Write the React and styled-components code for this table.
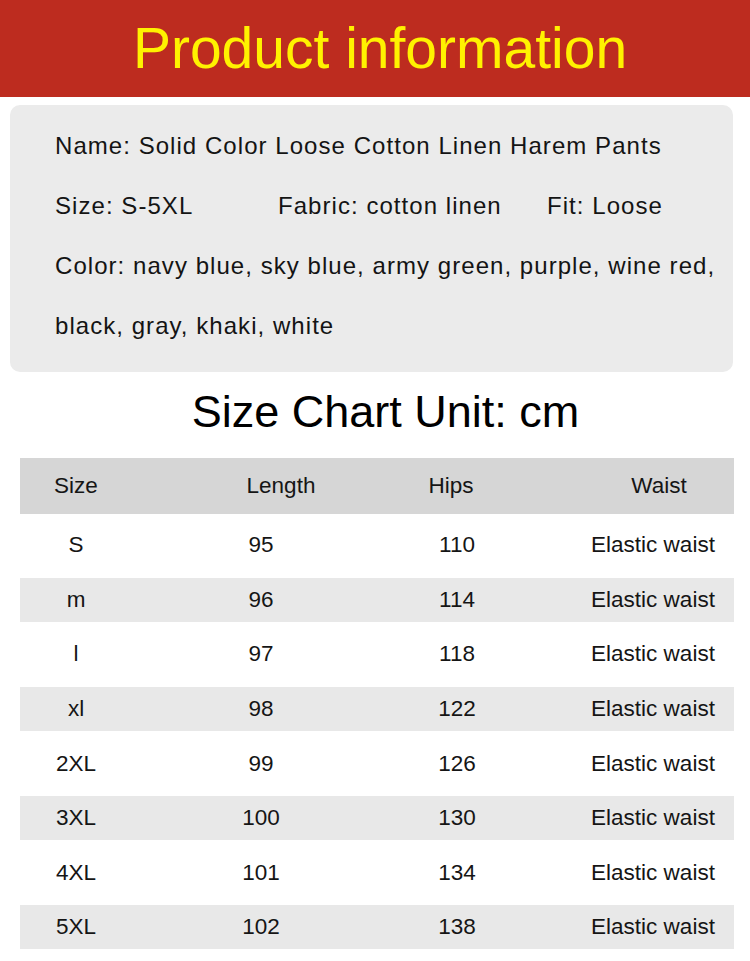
import React from 'react';
import styled, { createGlobalStyle } from 'styled-components';

const GlobalStyle = createGlobalStyle`
  body {
    margin: 0;
    background: #ffffff;
    font-family: "Liberation Sans", Arial, sans-serif;
    color: #111111;
  }
`

const Page = styled.div`
  width: 750px;
  display: flex;
  flex-direction: column;
`

const Banner = styled.header`
  height: 97px;
  background: #bd2c1f;
  display: flex;
  align-items: center;
  justify-content: center;
`

const BannerTitle = styled.h1`
  margin: 0 0 0 10px;
  font-size: 57px;
  font-weight: 400;
  line-height: 1;
  color: #fff200;
`

const InfoCard = styled.section`
  margin: 8px 17px 0 10px;
  height: 267px;
  box-sizing: border-box;
  padding: 11px 0 0 45px;
  background: #ebebeb;
  border-radius: 10px;
`

const InfoLine = styled.div`
  display: flex;
  font-size: 24px;
  letter-spacing: 1.05px;
  line-height: 60px;
  color: #141414;
  white-space: nowrap;
`

const Field = styled.span`
  width: ${props => props.$w ? props.$w + 'px' : 'auto'};
`

const ChartTitle = styled.h2`
  margin: 14px 0 0;
  padding-left: 21px;
  text-align: center;
  font-size: 45px;
  font-weight: 400;
  line-height: 52px;
  color: #000;
`

const Table = styled.div`
  margin: 20px 16px 0 20px;
  display: flex;
  flex-direction: column;
`

const HeadRow = styled.div`
  display: grid;
  grid-template-columns: 224px 74px 266px 150px;
  height: 56px;
  align-items: center;
  background: #d6d6d6;
  margin-bottom: 4px;
`

const BodyRow = styled.div`
  display: grid;
  grid-template-columns: 160px 162px 230px 162px;
  height: 54.6px;
  box-sizing: border-box;
  padding: 5.3px 0;
  align-items: center;
  background: ${props => props.$shaded ? '#e8e8e8' : 'transparent'};
  background-clip: content-box;
`

const Cell = styled.div`
  text-align: center;
  font-size: 22.5px;
  color: #151515;
  white-space: nowrap;
  padding-right: ${props => props.$pr || 0}px;
`

const rows = [
  ['S', '95', '110'],
  ['m', '96', '114'],
  ['l', '97', '118'],
  ['xl', '98', '122'],
  ['2XL', '99', '126'],
  ['3XL', '100', '130'],
  ['4XL', '101', '134'],
  ['5XL', '102', '138'],
];

const App = () => {
  return (
    <Page>
      <GlobalStyle />
      <Banner>
        <BannerTitle>Product information</BannerTitle>
      </Banner>
      <InfoCard>
        <InfoLine>Name: Solid Color Loose Cotton Linen Harem Pants</InfoLine>
        <InfoLine>
          <Field $w={223}>Size: S-5XL</Field>
          <Field $w={269}>Fabric: cotton linen</Field>
          <Field>Fit: Loose</Field>
        </InfoLine>
        <InfoLine>Color: navy blue, sky blue, army green, purple, wine red,</InfoLine>
        <InfoLine>black, gray, khaki, white</InfoLine>
      </InfoCard>
      <ChartTitle>Size Chart Unit: cm</ChartTitle>
      <Table>
        <HeadRow>
          <Cell $pr={112}>Size</Cell>
          <Cell>Length</Cell>
          <Cell>Hips</Cell>
          <Cell>Waist</Cell>
        </HeadRow>
        {rows.map((row, i) => (
          <BodyRow key={row[0]} $shaded={i % 2 === 1}>
            <Cell $pr={48}>{row[0]}</Cell>
            <Cell>{row[1]}</Cell>
            <Cell>{row[2]}</Cell>
            <Cell>Elastic waist</Cell>
          </BodyRow>
        ))}
      </Table>
    </Page>
  );
};

export default App;
